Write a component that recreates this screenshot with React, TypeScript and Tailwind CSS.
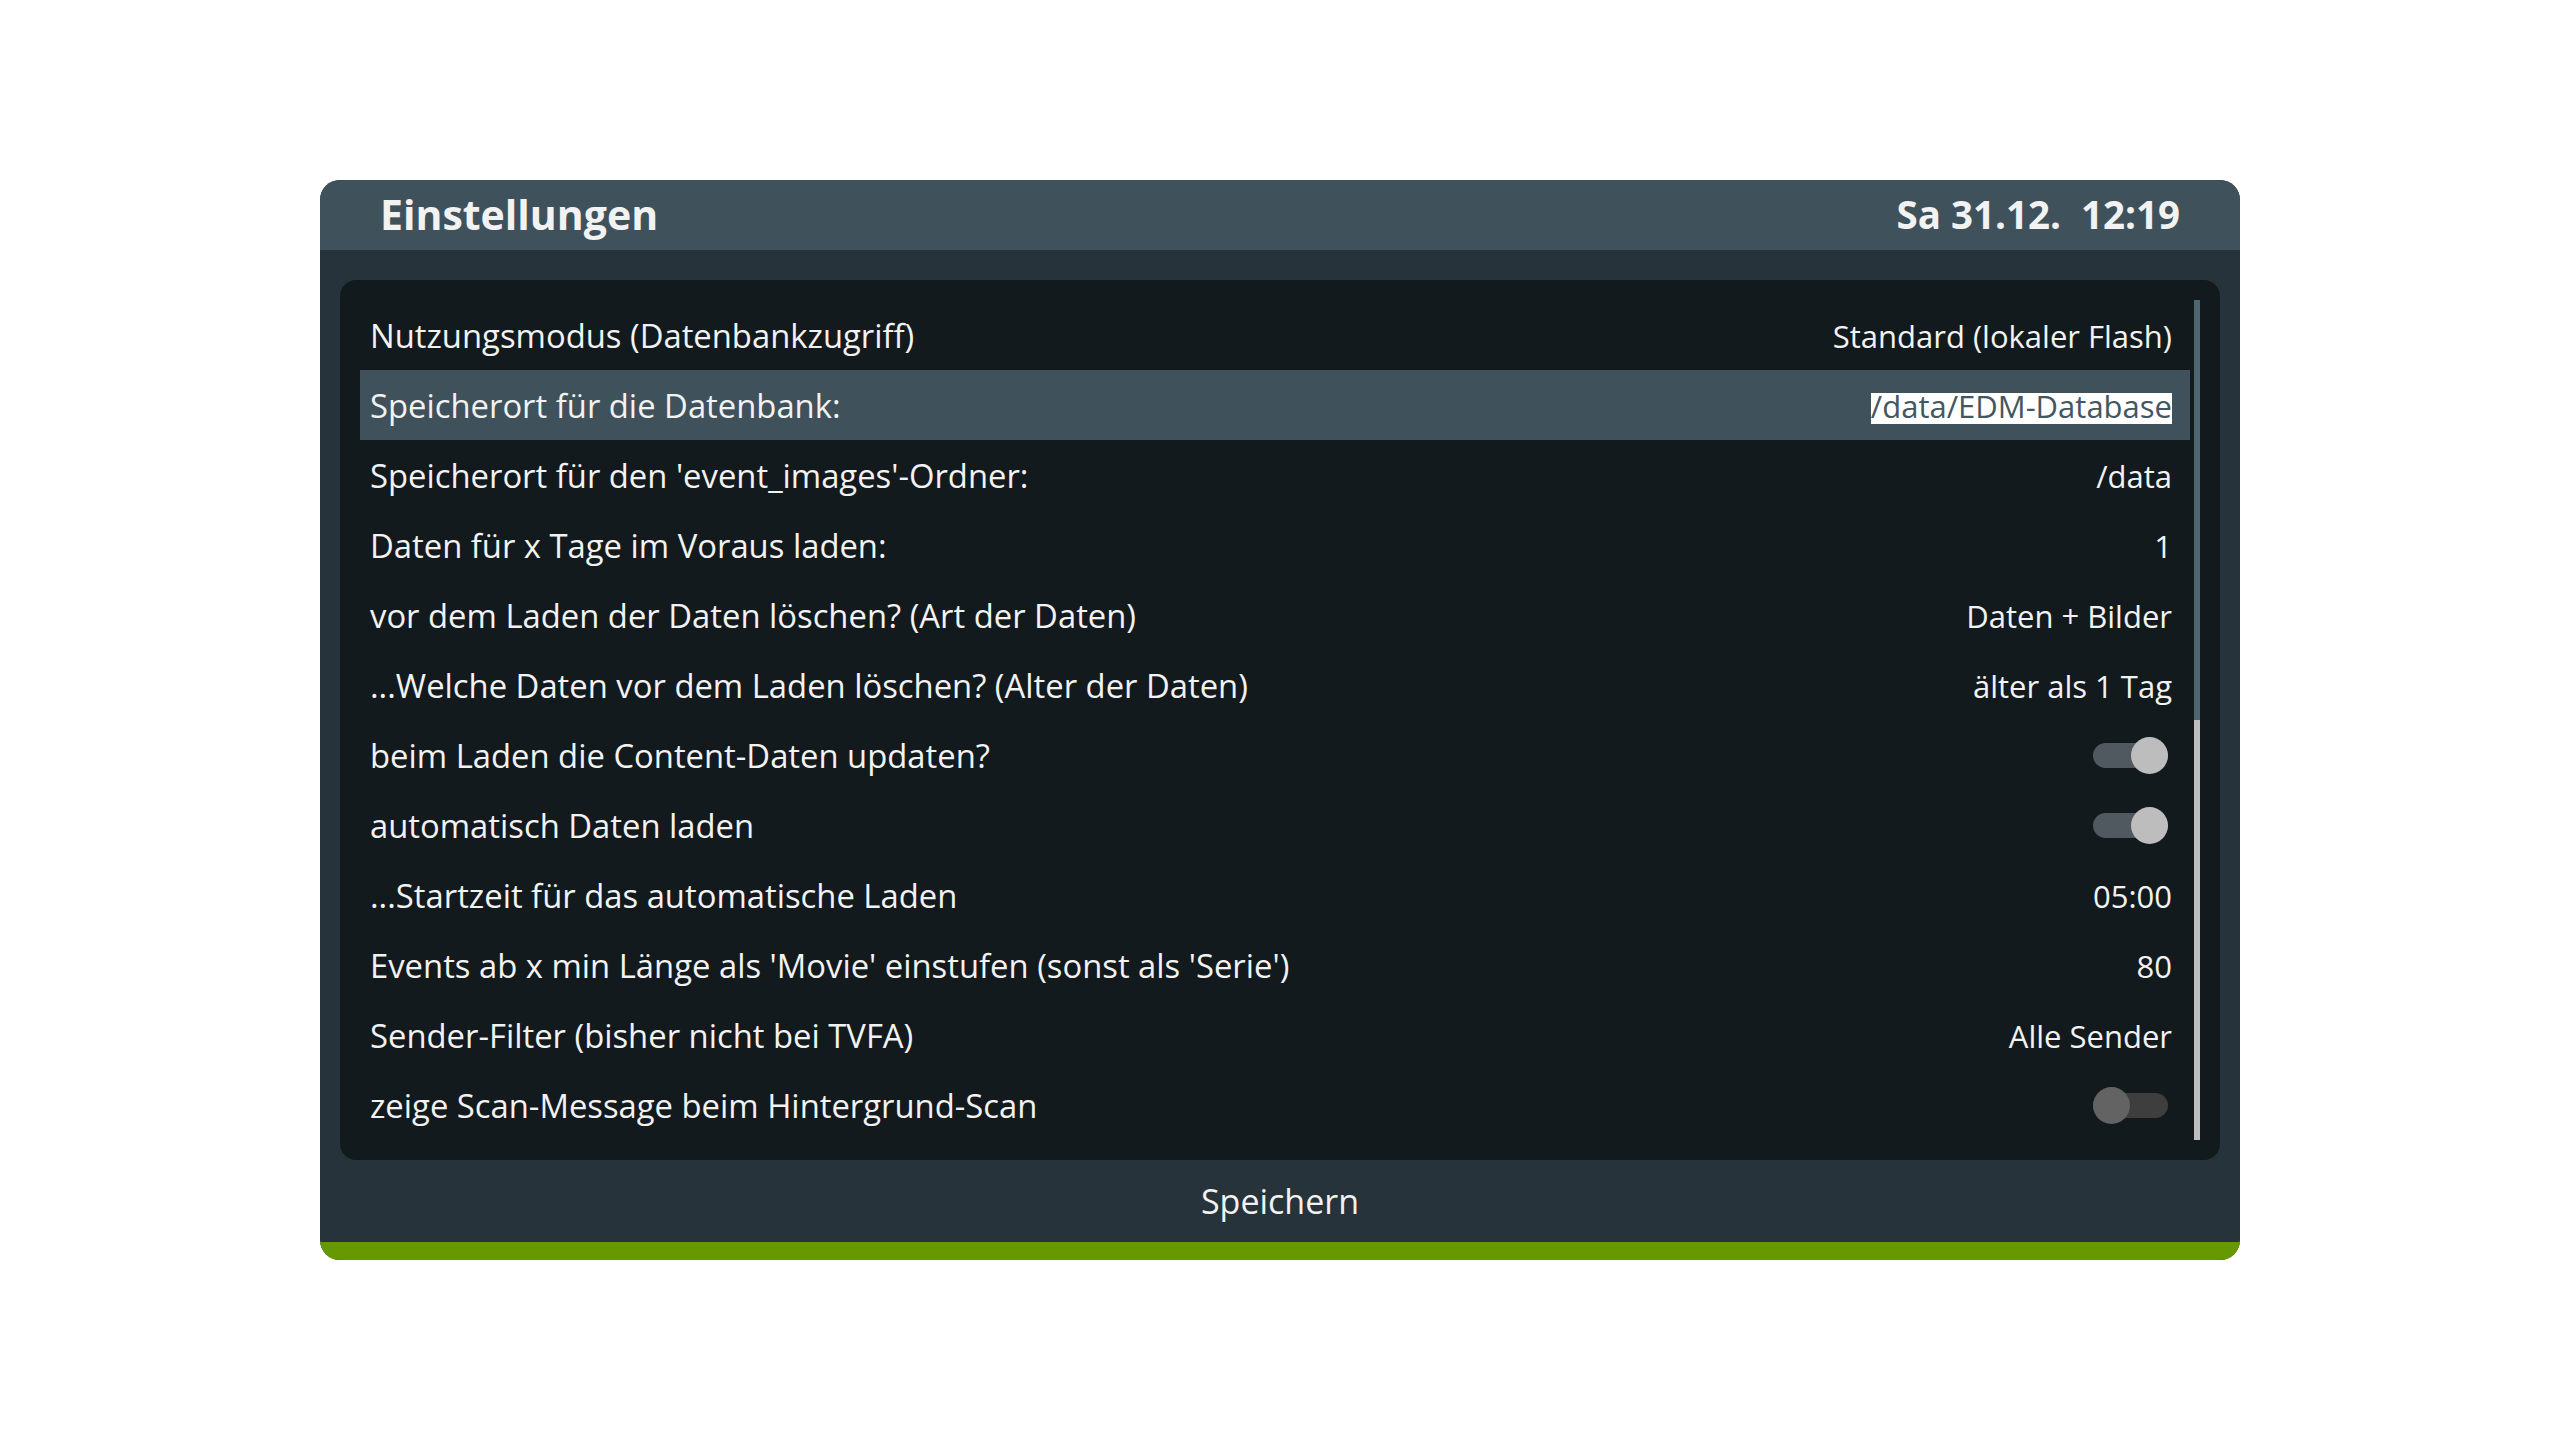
import React from 'react';

// ============================================================================
// DATA
// ============================================================================

type Setting = {
  label: string;
  value?: string;
  toggle?: boolean;
};

const settings: Setting[] = [
  { label: 'Nutzungsmodus (Datenbankzugriff)', value: 'Standard (lokaler Flash)' },
  { label: 'Speicherort für die Datenbank:', value: '/data/EDM-Database' },
  { label: "Speicherort für den 'event_images'-Ordner:", value: '/data' },
  { label: 'Daten für x Tage im Voraus laden:', value: '1' },
  { label: 'vor dem Laden der Daten löschen? (Art der Daten)', value: 'Daten + Bilder' },
  { label: '...Welche Daten vor dem Laden löschen? (Alter der Daten)', value: 'älter als 1 Tag' },
  { label: 'beim Laden die Content-Daten updaten?', toggle: true },
  { label: 'automatisch Daten laden', toggle: true },
  { label: '...Startzeit für das automatische Laden', value: '05:00' },
  { label: "Events ab x min Länge als 'Movie' einstufen (sonst als 'Serie')", value: '80' },
  { label: 'Sender-Filter (bisher nicht bei TVFA)', value: 'Alle Sender' },
  { label: 'zeige Scan-Message beim Hintergrund-Scan', toggle: false },
];

const SELECTED = 1;

// ============================================================================
// COMPONENTS
// ============================================================================

function Toggle({ on }: { on: boolean }) {
  return (
    <div className="relative mr-[4px] h-[37px] w-[75px]">
      <div
        className={
          on
            ? 'absolute left-0 right-0 top-[6px] h-[25px] rounded-full bg-[#50595f]'
            : 'absolute left-0 right-0 top-[6px] h-[25px] rounded-full bg-[#3e3e3e]'
        }
      />
      <div
        className={
          on
            ? 'absolute right-0 top-0 h-[37px] w-[37px] rounded-full bg-[#bdbdbd]'
            : 'absolute left-0 top-0 h-[37px] w-[37px] rounded-full bg-[#636363]'
        }
      />
    </div>
  );
}

function SettingRow({ setting, selected }: { setting: Setting; selected: boolean }) {
  return (
    <div
      className={
        selected
          ? 'flex h-[70px] items-center justify-between bg-[#3f525c] pl-[10px] pr-[18px]'
          : 'flex h-[70px] items-center justify-between pl-[10px] pr-[18px]'
      }
    >
      <span className="pt-[2px] text-[32.8px]">{setting.label}</span>
      {setting.toggle !== undefined ? (
        <Toggle on={setting.toggle} />
      ) : selected ? (
        <span className="mt-[6px] inline-block h-[31px] bg-white text-[31px] leading-[27px] text-[#44565f]">
          {setting.value}
        </span>
      ) : (
        <span className="pt-[3px] text-[31px]">{setting.value}</span>
      )}
    </div>
  );
}

export default function App() {
  return (
    <div
      className="flex h-[1440px] w-[2560px] items-center justify-center bg-white"
      style={{ fontFamily: '"Open Sans", "Noto Sans", sans-serif' }}
    >
      <div className="flex h-[1080px] w-[1920px] flex-col overflow-hidden rounded-[20px] bg-[#27333b] text-[#f2f2f2]">
        {/* header */}
        <div className="flex h-[70px] items-center justify-between bg-[#3f525c] px-[60px] font-bold">
          <span className="text-[41px]">Einstellungen</span>
          <span className="whitespace-pre text-[38.5px]">Sa 31.12.  12:19</span>
        </div>

        {/* settings list */}
        <div className="mx-[20px] mt-[30px] flex h-[880px] gap-[4px] rounded-[16px] bg-[#131a1d] py-[20px] pl-[20px] pr-[20px]">
          <div className="flex flex-1 flex-col">
            {settings.map((s, i) => (
              <SettingRow key={s.label} setting={s} selected={i === SELECTED} />
            ))}
          </div>
          <div className="flex w-[6px] flex-col bg-[#bdbdbd]">
            <div className="h-[420px] bg-[#4e6672]" />
          </div>
        </div>

        {/* footer */}
        <div className="flex h-[82px] items-center justify-center text-[34px]">Speichern</div>
        <div className="h-[18px] bg-[#669900]" />
      </div>
    </div>
  );
}
